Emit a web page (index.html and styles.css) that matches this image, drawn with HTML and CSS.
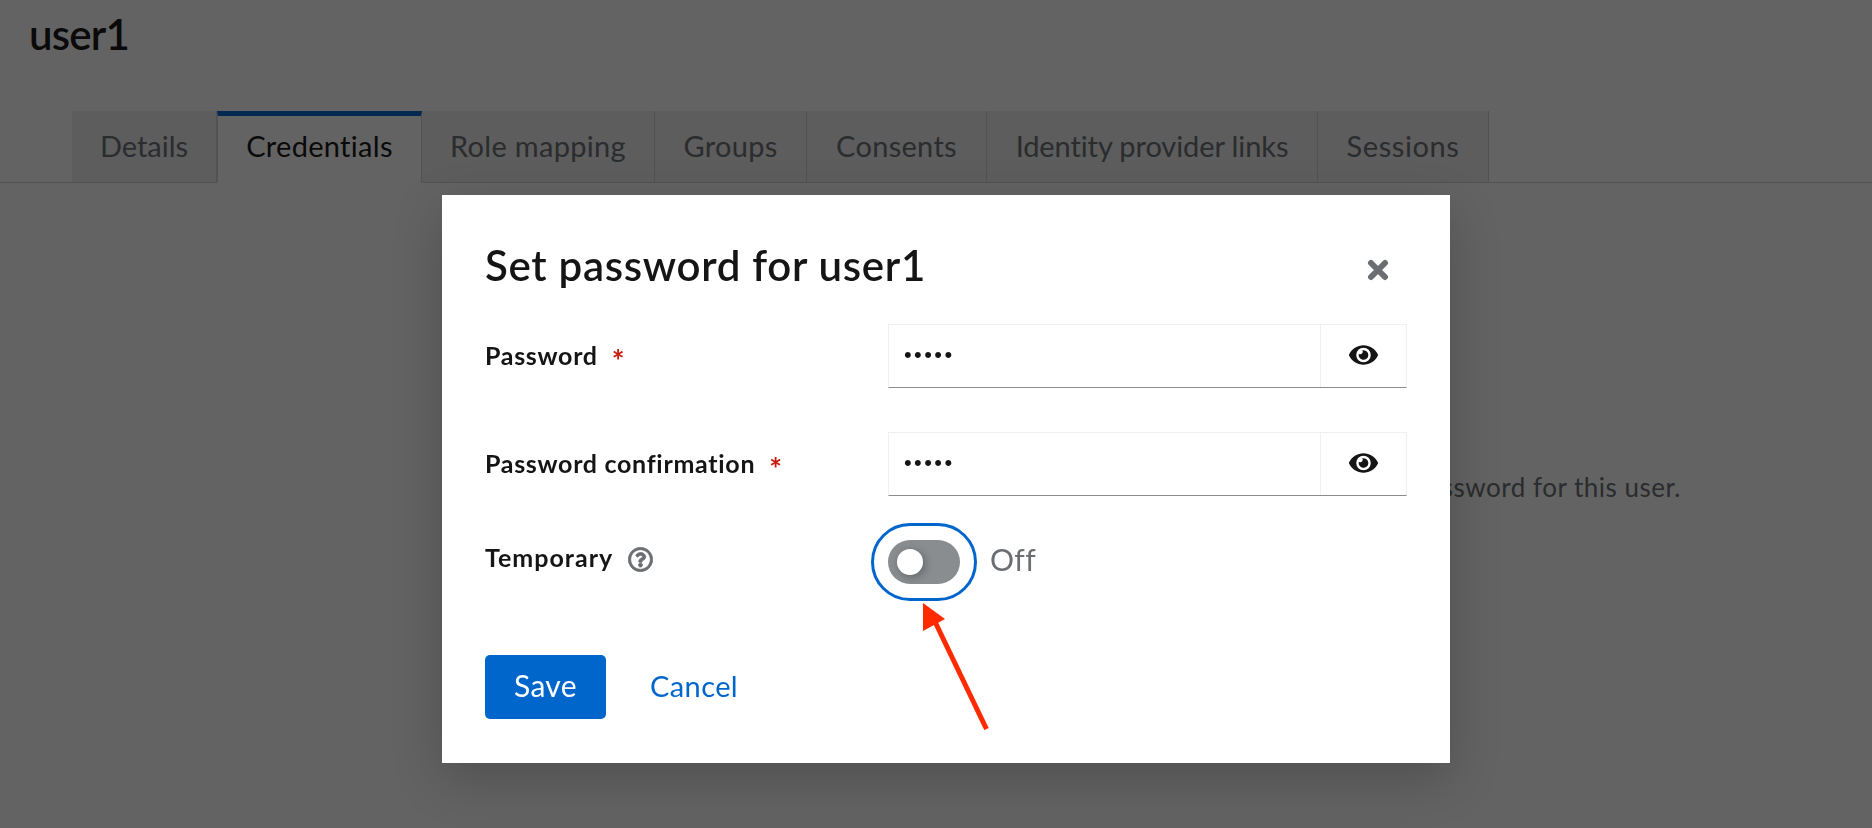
FILE: index.html
```html
<!DOCTYPE html>
<html lang="en">
  <head>
    <meta charset="UTF-8" />
    <title>Set password for user1</title>
    <link rel="stylesheet" href="styles.css">
  </head>
  <body>
    <h1 class="user-name">user1</h1>

    <ul class="tabs">
      <li class="tab-tight">Details</li>
      <li class="active">Credentials</li>
      <li>Role mapping</li>
      <li>Groups</li>
      <li>Consents</li>
      <li class="tab-long">Identity provider links</li>
      <li class="tab-wide">Sessions</li>
    </ul>

    <p class="empty-text">This user does not have any credentials. You can set password for this user.</p>

    <div class="backdrop"></div>

    <div class="modal">
      <div class="modal-header">
        <h2>Set password for user1</h2>
        <svg class="close-icon" viewBox="0 0 22 22">
          <path d="M4 4 L18 18 M18 4 L4 18" />
        </svg>
      </div>

      <form class="form">
        <label class="form-label">Password <span class="required">*</span></label>
        <div class="input-group">
          <input type="password" value="12345" />
          <button type="button" class="eye-button">
            <svg viewBox="0 0 576 512"><path d="M572.52 241.4C518.29 135.59 410.93 64 288 64S57.68 135.64 3.48 241.41a32.35 32.35 0 0 0 0 29.19C57.71 376.41 165.07 448 288 448s230.32-71.64 284.52-177.41a32.35 32.35 0 0 0 0-29.19zM288 400a144 144 0 1 1 144-144 143.93 143.93 0 0 1-144 144zm0-240a95.31 95.31 0 0 0-25.31 3.79 47.85 47.85 0 0 1-66.9 66.9A95.78 95.78 0 1 0 288 160z"/></svg>
          </button>
        </div>

        <label class="form-label">Password confirmation <span class="required">*</span></label>
        <div class="input-group">
          <input type="password" value="12345" />
          <button type="button" class="eye-button">
            <svg viewBox="0 0 576 512"><path d="M572.52 241.4C518.29 135.59 410.93 64 288 64S57.68 135.64 3.48 241.41a32.35 32.35 0 0 0 0 29.19C57.71 376.41 165.07 448 288 448s230.32-71.64 284.52-177.41a32.35 32.35 0 0 0 0-29.19zM288 400a144 144 0 1 1 144-144 143.93 143.93 0 0 1-144 144zm0-240a95.31 95.31 0 0 0-25.31 3.79 47.85 47.85 0 0 1-66.9 66.9A95.78 95.78 0 1 0 288 160z"/></svg>
          </button>
        </div>

        <label class="form-label label-temporary">
          Temporary
          <svg class="help-icon" viewBox="0 0 512 512"><path d="M256 8C119.043 8 8 119.083 8 256c0 136.997 111.043 248 248 248s248-111.003 248-248C504 119.083 392.957 8 256 8zm0 448c-110.532 0-200-89.431-200-200 0-110.495 89.472-200 200-200 110.491 0 200 89.471 200 200 0 110.53-89.431 200-200 200zm107.244-255.2c0 67.052-72.421 68.084-72.421 92.863V300c0 6.627-5.373 12-12 12h-45.647c-6.627 0-12-5.373-12-12v-8.659c0-35.745 27.1-50.034 47.579-61.516 17.561-9.845 28.324-16.541 28.324-29.579 0-17.246-21.999-28.693-39.784-28.693-23.189 0-33.894 10.977-48.942 29.969-4.057 5.12-11.46 6.071-16.666 2.124l-27.824-21.098c-5.107-3.872-6.251-11.066-2.644-16.363C184.846 131.491 214.94 112 261.794 112c49.071 0 101.45 38.304 101.45 88.8zM298 368c0 23.159-18.841 42-42 42s-42-18.841-42-42 18.841-42 42-42 42 18.841 42 42z"/></svg>
        </label>
        <div class="switch-row">
          <span class="switch"><span class="knob"></span></span>
          <span class="switch-text">Off</span>
        </div>
      </form>

      <div class="actions">
        <button type="button" class="btn-save">Save</button>
        <a class="btn-cancel">Cancel</a>
      </div>

      <svg class="arrow" viewBox="0 0 70 130">
        <path class="arrow-line" d="M15.600 23 L66.500 129" />
        <path class="arrow-head" d="M3 3 L25 19 L3 31 Z" />
      </svg>
    </div>
  </body>
</html>
```

FILE: styles.css
```css
* {
  box-sizing: border-box;
}

body {
  margin: 0;
  height: 828px;
  overflow: hidden;
  background: #fff;
  font-family: Lato, "Noto Sans", sans-serif;
  color: #151515;
}

.user-name {
  margin: 0;
  padding: 9px 0 0 29px;
  height: 111px;
  font-size: 42px;
  line-height: 50px;
  font-weight: 600;
  letter-spacing: -0.8px;
}

.tabs {
  display: grid;
  grid-template-columns: 145px 205px 233px 152px 180px 331px 171px;
  list-style: none;
  margin: 0;
  padding: 0 0 0 72px;
  border-bottom: 1px solid #d2d2d2;
  font-size: 29px;
  letter-spacing: 0.3px;
}

.tabs li {
  height: 72px;
  line-height: 70px;
  text-align: center;
  margin-bottom: -1px;
  background: #f0f0f0;
  color: #6a6e73;
  border-bottom: 1px solid #d2d2d2;
  border-right: 1px solid #d2d2d2;
}

.tabs li.active {
  background: #fff;
  color: #151515;
  border-top: 5px solid #06c;
  border-left: 1px solid #d2d2d2;
  border-bottom: 1px solid #fff;
  line-height: 60px;
}

.tabs li.tab-tight {
  letter-spacing: 0;
}

.tabs li.tab-long {
  letter-spacing: -0.1px;
}

.tabs li.tab-wide {
  letter-spacing: 0.6px;
}

.empty-text {
  margin: 286px 0 0;
  padding-right: 191px;
  text-align: right;
  font-size: 26px;
  line-height: 36px;
  letter-spacing: 0.5px;
  color: #6a6e73;
}

.backdrop {
  position: fixed;
  inset: 0;
  background: rgba(3, 3, 3, 0.62);
}

.modal {
  position: fixed;
  left: 442px;
  top: 195px;
  width: 1008px;
  height: 568px;
  padding: 44px 43px 44px 43px;
  background: #fff;
  box-shadow: 0 16px 48px rgba(0, 0, 0, 0.2);
}

.modal-header {
  display: flex;
  justify-content: space-between;
  align-items: center;
  height: 56px;
}

.modal-header h2 {
  margin: 0 0 4px;
  font-size: 42px;
  line-height: 56px;
  font-weight: 600;
  letter-spacing: 0.7px;
}

.close-icon {
  width: 22px;
  height: 22px;
  margin: 5px 18px 0 0;
}

.close-icon path {
  fill: none;
  stroke: #6a6e73;
  stroke-width: 6;
  stroke-linecap: round;
}

.form {
  display: grid;
  grid-template-columns: 403px 1fr;
  grid-template-rows: 64px 64px 44px;
  row-gap: 44px;
  margin-top: 29px;
}

.form-label {
  display: flex;
  align-items: center;
  gap: 14px;
  padding-bottom: 2px;
  font-size: 25px;
  font-weight: 700;
  letter-spacing: 0.7px;
}

.required {
  color: #c9190b;
  font-size: 30px;
  line-height: 30px;
  margin-top: 9px;
}

.label-temporary {
  margin-top: -9px;
  letter-spacing: 1px;
  gap: 15px;
}

.help-icon {
  width: 25px;
  height: 25px;
  fill: #6a6e73;
  stroke: #6a6e73;
  stroke-width: 16;
  margin-top: 5px;
}

.input-group {
  display: flex;
  border: 1px solid #f0f0f0;
  border-bottom-color: #8a8d90;
}

.input-group input {
  flex: 1;
  min-width: 0;
  border: 0;
  outline: 0;
  padding: 0 15px 2px;
  font-family: "Liberation Sans", sans-serif;
  font-size: 22px;
  letter-spacing: 2.4px;
  color: #151515;
  background: #fff;
}

.eye-button {
  display: flex;
  align-items: center;
  justify-content: center;
  width: 86px;
  padding: 0 1px 0 0;
  border: 0;
  border-left: 1px solid #f0f0f0;
  background: #fff;
}

.eye-button svg {
  width: 29px;
  height: 26px;
  margin-bottom: 3px;
  fill: #151515;
}

.switch-row {
  display: flex;
  align-items: center;
  gap: 30px;
  margin-top: -1px;
}

.switch {
  display: flex;
  align-items: center;
  width: 72px;
  height: 44px;
  padding-left: 9px;
  border-radius: 22px;
  background: #8a8d90;
  outline: 3px solid #06c;
  outline-offset: 14px;
}

.knob {
  width: 26px;
  height: 26px;
  border-radius: 50%;
  background: #fff;
  box-shadow: 2px 2px 8px rgba(3, 3, 3, 0.3);
}

.switch-text {
  margin-bottom: 5px;
  font-size: 30px;
  letter-spacing: 0.4px;
  color: #6a6e73;
}

.actions {
  display: flex;
  align-items: center;
  gap: 44px;
  margin-top: 71px;
}

.btn-save {
  width: 121px;
  height: 64px;
  padding: 0 0 4px;
  border: 0;
  border-radius: 5px;
  background: #06c;
  color: #fff;
  font-family: inherit;
  font-size: 30px;
  letter-spacing: 0.3px;
}

.btn-cancel {
  margin-bottom: 4px;
  color: #06c;
  font-size: 29px;
  letter-spacing: 0.4px;
}

.arrow {
  position: absolute;
  left: 478px;
  top: 405px;
  width: 70px;
  height: 130px;
}

.arrow-line {
  fill: none;
  stroke: #ff2a00;
  stroke-width: 5;
}

.arrow-head {
  fill: #ff2a00;
}
```
